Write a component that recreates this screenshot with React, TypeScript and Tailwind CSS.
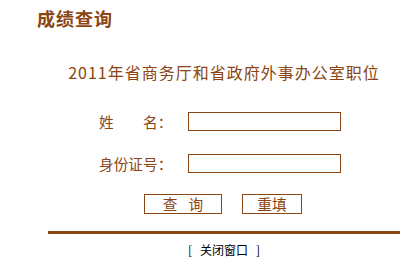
import React from "react";

const brown = "text-[#8B4513]";

export default function App() {
  return (
    <div
      className="w-[418px] h-[277px] bg-white overflow-hidden"
      style={{ fontFamily: '"Noto Sans CJK SC", "Noto Sans", sans-serif' }}
    >
      <div className={`pt-[6px] pl-[37px] text-[18px] leading-[24px] font-bold tracking-[1px] ${brown}`}>
        成绩查询
      </div>
      <div className="ml-[48px] w-[352px] flex flex-col">
        <div className={`mt-[30px] h-[24px] leading-[24px] text-center text-[16px] tracking-[1px] ${brown}`}>
          2011年省商务厅和省政府外事办公室职位
        </div>
        <div className="mt-[28px] flex items-center h-[19px] pl-[51px]">
          <span className={`w-[89px] text-[14.67px] leading-[19px] whitespace-pre ${brown}`}>姓　　名：</span>
          <input className="w-[153px] h-[19px] border border-[#8B4513] bg-white outline-none" />
        </div>
        <div className="mt-[23px] flex items-center h-[19px] pl-[51px]">
          <span className={`w-[89px] text-[14.67px] leading-[19px] whitespace-pre ${brown}`}>身份证号：</span>
          <input className="w-[153px] h-[19px] border border-[#8B4513] bg-white outline-none" />
        </div>
        <div className="mt-[21px] flex pl-[96px] gap-[20px]">
          <button className={`w-[78px] h-[20px] border border-[#8B4513] bg-white flex items-center justify-center gap-[11px] text-[14.67px] leading-[18px] ${brown}`}>
            <span>查</span>
            <span>询</span>
          </button>
          <button className={`w-[60px] h-[20px] border border-[#8B4513] bg-white flex items-center justify-center text-[14.67px] leading-[18px] ${brown}`}>
            重填
          </button>
        </div>
        <div className="mt-[17px] h-[3px] w-full bg-[#8B4513]" />
        <div className="mt-[8px] h-[16px] leading-[16px] text-[12px] text-black flex justify-center">
          <span>[</span>
          <span className="ml-[8px]">关闭窗口</span>
          <span className="ml-[8px]">]</span>
        </div>
      </div>
    </div>
  );
}
